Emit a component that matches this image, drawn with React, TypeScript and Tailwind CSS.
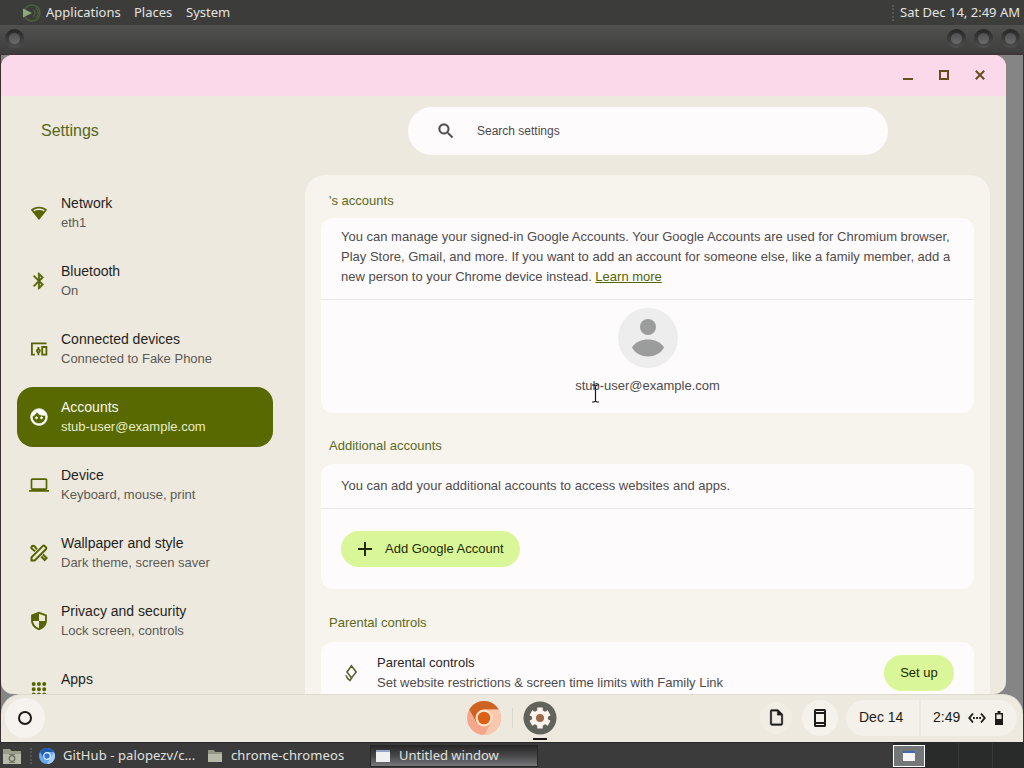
import type { ReactNode } from 'react';
import {
    MdBluetooth,
    MdFace,
    MdOutlineInsertDriveFile,
    MdOutlineLaptop,
    MdSearch,
} from 'react-icons/md';

interface NavItem {
    icon: ReactNode;
    label: string;
    sub?: string;
    active?: boolean;
}

function WifiIcon() {
    return (
        <svg viewBox="0 0 20 20" className="h-5 w-5" fill="currentColor">
            <path fillRule="evenodd" d="M10 3.8c3.2 0 6 1.1 8.2 3L10 17 1.8 6.8C4 4.9 6.8 3.8 10 3.8zm0 1.7c-2.1 0-4.100.6-5.800 1.600l.9 1.100C6.500 7.500 8.200 7.100 10 7.100s3.500.4 4.900 1.100l.9-1.100C14.100 6.100 12.100 5.500 10 5.500z" />
        </svg>
    );
}

function DevicesIcon() {
    return (
        <svg viewBox="0 0 20 20" className="h-5 w-5" fill="none" stroke="currentColor" strokeWidth="1.8">
            <path d="M17.500 4.300H2.900v11.400h3M13.200 8h4.200v7.700h-4.200z" />
            <circle cx="9.400" cy="11.800" r="1.500" />
            <path d="M9.400 8v2.200M9.400 13.400v2.900" />
        </svg>
    );
}

function StyleIcon() {
    return (
        <svg viewBox="0 0 20 20" className="h-5 w-5" fill="none" stroke="currentColor" strokeWidth="2">
            <path d="M2.500 17.500v-3.200L13.700 3.100a1.500 1.500 0 0 1 2.100 0l1.100 1.100a1.500 1.500 0 0 1 0 2.100L5.700 17.500z" />
            <path d="M8 6.300 5.500 3.200a1.700 1.700 0 0 0-2.500 2.500l3.200 2.500M12.300 13.500l3.300 3.500 2-2-3.700-3.400" />
        </svg>
    );
}

function ShieldIcon() {
    return (
        <svg viewBox="0 0 24 24" className="h-5 w-5" fill="currentColor">
            <path fillRule="evenodd" d="M12 1 21.500 4.500V11.500c0 5.300-4 10-9.500 11.500-5.500-1.500-9.500-6.200-9.500-11.500V4.500zM12 3.300V12h7.300V6zM12 12H4.700c.5 4 3.400 7.300 7.300 8.600z" />
        </svg>
    );
}

function AppsIcon() {
    return (
        <svg viewBox="0 0 20 20" className="h-5 w-5" fill="none" stroke="currentColor" strokeWidth="4" strokeLinecap="round" strokeDasharray="0 5.25">
            <path d="M4.700 5h11M4.700 10.200h11M4.700 15.400h11" />
        </svg>
    );
}

const navItems: NavItem[] = [
    { icon: <WifiIcon />, label: 'Network', sub: 'eth1' },
    { icon: <MdBluetooth className="h-5 w-5 stroke-current stroke-[0.4] [&>path[fill=none]]:stroke-none" />, label: 'Bluetooth', sub: 'On' },
    { icon: <DevicesIcon />, label: 'Connected devices', sub: 'Connected to Fake Phone' },
    { icon: <MdFace className="h-5 w-5 stroke-current stroke-[0.8] [&>path[fill=none]]:stroke-none" />, label: 'Accounts', sub: 'stub-user@example.com', active: true },
    { icon: <MdOutlineLaptop className="h-5 w-5" />, label: 'Device', sub: 'Keyboard, mouse, print' },
    { icon: <StyleIcon />, label: 'Wallpaper and style', sub: 'Dark theme, screen saver' },
    { icon: <ShieldIcon />, label: 'Privacy and security', sub: 'Lock screen, controls' },
    { icon: <AppsIcon />, label: 'Apps' },
];

function Knob() {
    return (
        <span className="flex h-[19px] w-[19px] items-center justify-center rounded-full bg-gradient-to-b from-[#262626] to-[#505050]">
            <span className="h-[11px] w-[11px] rounded-full bg-gradient-to-b from-[#505050] to-[#6a6a6a]" />
        </span>
    );
}

function TopPanel() {
    return (
        <div className="flex h-[25px] shrink-0 items-center bg-[#3c3c3b] pl-5 pr-1 font-['Noto_Sans',sans-serif] text-[13px] text-[#e4e4e0]">
            <svg viewBox="0 0 22 20" className="h-5 w-[22px]" fill="none">
                <circle cx="12" cy="10" r="8" stroke="#4d6338" strokeWidth="1.5" />
                <path d="M3 5.500v9l9-4.500z" fill="#8cab78" />
                <path d="M13 6.500a4 4 0 0 1 0 7M15.500 5a6 6 0 0 1 0 10" stroke="#56703e" />
            </svg>
            <span className="ml-1 w-[88px]">Applications</span>
            <span className="w-[52px]">Places</span>
            <span>System</span>
            <span className="ml-auto mr-1.5 h-4 border-l-2 border-dotted border-[#565656]" />
            <span className="whitespace-nowrap">Sat Dec 14, 2:49 AM</span>
        </div>
    );
}

function Sidebar() {
    return (
        <nav className="flex w-[304px] shrink-0 flex-col gap-2 pl-4 pt-2">
            {navItems.map((item) => (
                <div
                    key={item.label}
                    className={`flex h-[60px] w-64 shrink-0 gap-3 rounded-2xl pl-3 ${item.active ? 'bg-[#576900] text-white' : 'text-[#566500]'}`}
                >
                    <div className="flex items-center">{item.icon}</div>
                    <div className="pt-2.5">
                        <p className={`text-sm leading-5 ${item.active ? 'text-[#f8f9e9]' : 'text-[#1f1f1c]'}`}>{item.label}</p>
                        {item.sub && (
                            <p className={`text-[13px] leading-[19px] ${item.active ? 'text-[#e9eeca]' : 'text-[#5b5a54]'}`}>{item.sub}</p>
                        )}
                    </div>
                </div>
            ))}
        </nav>
    );
}

function AccountsPage() {
    return (
        <main className="w-[685px] shrink-0 rounded-t-[20px] bg-[#f7f3ed] px-4 text-[13px] text-[#4e4b4c]">
            <h2 className="h-[43px] pl-2 pt-4 leading-5 text-[#5a6a1d]">&apos;s accounts</h2>
            <section className="h-[195px] rounded-xl bg-[#fefbfc]">
                <p className="h-[82px] border-b border-[#ebe7e6] px-5 pt-[9px] leading-5 whitespace-nowrap">
                    You can manage your signed-in Google Accounts. Your Google Accounts are used for Chromium browser,
                    <br />
                    Play Store, Gmail, and more. If you want to add an account for someone else, like a family member, add a
                    <br />
                    new person to your Chrome device instead. <a className="text-[#566500] underline">Learn more</a>
                </p>
                <div className="flex flex-col items-center pt-2">
                    <svg viewBox="0 0 60 60" className="h-[60px] w-[60px]">
                        <circle cx="30" cy="30" r="30" fill="#ededed" />
                        <circle cx="30" cy="19" r="8" fill="#9b9d9c" />
                        <path d="M14 39.500C17 34 24 31.500 30 31.500s13 2.500 16 8C43 45.500 36 48.500 30 48.500s-13-3-16-9z" fill="#9b9d9c" />
                    </svg>
                    <p className="mt-2 leading-5">stub-user@example.com</p>
                </div>
            </section>

            <h2 className="h-[51px] pl-2 pt-[23px] leading-5 text-[#5a6a1d]">Additional accounts</h2>
            <section className="h-[125px] rounded-xl bg-[#fefbfc]">
                <p className="h-[45px] border-b border-[#ebe7e6] px-5 pt-3 leading-5">
                    You can add your additional accounts to access websites and apps.
                </p>
                <button className="ml-5 mt-[22px] flex h-9 w-[179px] items-center rounded-full bg-[#d9f799] pl-3.5 text-[#1f2a00]">
                    <svg viewBox="0 0 20 20" className="mr-2.5 h-5 w-5" stroke="currentColor" strokeWidth="2">
                        <path d="M10 3v14M3 10h14" />
                    </svg>
                    Add Google Account
                </button>
            </section>

            <h2 className="h-[53px] pl-2 pt-6 leading-5 text-[#5a6a1d]">Parental controls</h2>
            <section className="flex h-20 items-start rounded-t-xl bg-[#fefbfc] pl-5 pr-5 pt-[11px]">
                <svg viewBox="0 0 20 20" className="mt-2.5 h-5 w-5" fill="none" stroke="#5d6130" strokeWidth="1.6">
                    <path d="M10.500 2.800 6 9l4.500 6 4.700-6zM4.500 12.500c1.200.2 1.300 1.500 1.800 2.500.8 1.300 2 1.800 2.700 2.500l2-3" />
                </svg>
                <div className="ml-4">
                    <p className="leading-5 text-[#282627]">Parental controls</p>
                    <p className="leading-5">Set website restrictions &amp; screen time limits with Family Link</p>
                </div>
                <button className="ml-auto mt-0.5 h-9 w-[70px] rounded-full bg-[#d9f799] text-[#1f2a00]">Set up</button>
            </section>
        </main>
    );
}

function SettingsWindow() {
    return (
        <div className="ml-px flex h-[639px] w-[1005px] shrink-0 flex-col overflow-hidden rounded-xl bg-[#ede9df]">
            <header className="flex h-[41px] shrink-0 items-center justify-end gap-[26px] bg-[#fbd9ea] pb-0.5 pr-[21px] text-[#64501c]">
                <span className="mt-2 h-0.5 w-2.5 bg-[#64501c]" />
                <span className="h-2.5 w-2.5 border-2 border-[#64501c]" />
                <svg viewBox="0 0 10 10" className="h-2.5 w-2.5" stroke="currentColor" strokeWidth="2">
                    <path d="m.8.8 8.400 8.400m0-8.400L.8 9.200" />
                </svg>
            </header>
            <div className="flex h-[79px] shrink-0 items-start pt-[11px]">
                <h1 className="w-[366px] pl-10 pt-3 text-base leading-6 text-[#56661b]">Settings</h1>
                <div className="ml-[41px] flex h-12 w-[480px] items-center rounded-full bg-[#fefbfd] pl-7 text-xs text-[#4b494b]">
                    <MdSearch className="mr-[21px] h-5 w-5 stroke-current stroke-[0.4] [&>path[fill=none]]:stroke-none" />
                    Search settings
                </div>
            </div>
            <div className="flex min-h-0 flex-1 overflow-hidden">
                <Sidebar />
                <AccountsPage />
            </div>
        </div>
    );
}

function Shelf() {
    return (
        <div className="mx-px flex h-12 items-center rounded-t-[20px] border-t border-[#dedbd3] bg-[#ede9df] pb-0.5 text-[14px] text-[#1d1c19]">
            <div className="ml-1 flex h-10 w-10 items-center justify-center rounded-full bg-[#f6f2ed]">
                <span className="h-3.5 w-3.5 rounded-full border-2 border-[#1c1b19]" />
            </div>
            <div className="ml-[422px] flex items-center">
                <svg viewBox="0 0 34 34" className="h-[34px] w-[34px]">
                    <circle cx="17" cy="17" r="17" fill="#f6a78b" />
                    <path d="M2.300 8.500A17 17 0 0 1 31.700 8.500L17 9l-7.500 12.500z" fill="#cd6221" />
                    <path d="M31.700 8.500A17 17 0 0 1 17 34l7.400-12.700L17 8.500z" fill="#fac8af" />
                    <circle cx="17" cy="17" r="8.500" fill="#ffe5c9" />
                    <circle cx="17" cy="17" r="6.300" fill="#dc6016" />
                </svg>
                <span className="ml-[11px] h-5 w-px bg-[#dcd8cf]" />
                <div className="relative ml-2.5">
                    <svg viewBox="0 0 34 34" className="h-[34px] w-[34px]">
                        <circle cx="17" cy="17" r="16.500" fill="#62635b" />
                        <path d="M17 6.500v21M7.900 11.750l18.200 10.500M7.900 22.250l18.200-10.500" stroke="#fff4ed" strokeWidth="5.5" />
                        <circle cx="17" cy="17" r="6" fill="#9b6a49" stroke="#fff4ed" strokeWidth="4" />
                    </svg>
                    <span className="absolute left-2.5 top-[37px] h-0.5 w-3.5 bg-[#181816]" />
                </div>
            </div>
            <div className="ml-[203px] flex items-center">
                <div className="flex h-8 w-8 items-center justify-center rounded-full bg-[#f1ede5]">
                    <MdOutlineInsertDriveFile className="h-[19px] w-[19px] stroke-current stroke-[0.4] [&>path[fill=none]]:stroke-none" />
                </div>
                <div className="ml-2.5 flex h-9 w-9 items-center justify-center rounded-full bg-[#f5f2ec]">
                    <svg viewBox="0 0 14 20" className="h-5 w-3.5" fill="none" stroke="currentColor" strokeWidth="2">
                        <rect x="2" y="2" width="10" height="16" rx="0.5" />
                        <path d="M2 5h10M2 15h10" />
                    </svg>
                </div>
                <div className="ml-2 flex h-9 w-[73px] items-center rounded-l-full bg-[#f4f0ea] pl-[13px]">Dec 14</div>
                <div className="ml-0.5 flex h-9 w-[96px] items-center rounded-r-full bg-[#f4f0ea] pl-3">
                    2:49
                    <svg viewBox="0 0 18 12" className="ml-2 h-3 w-[18px]" fill="none" stroke="currentColor" strokeWidth="1.9">
                        <path d="M5 1.500 1.300 6 5 10.500M13 1.500 16.700 6 13 10.500" />
                        <path d="M5 6h1.800m1.300 0h1.800m1.300 0H13" />
                    </svg>
                    <svg viewBox="0 0 8 14" className="ml-[9px] h-3.5 w-2" fill="none">
                        <path d="M2.500 0h3v2H8v12H0V2h2.500z" fill="#1d1c19" />
                        <path d="M1.500 3.500h5V8h-5z" fill="#ece9e1" />
                    </svg>
                </div>
            </div>
        </div>
    );
}

function FolderIcon() {
    return (
        <svg viewBox="0 0 16 16" className="h-4 w-4 shrink-0">
            <path d="M1 2h6l1 2h7v10H1z" fill="#929685" />
            <path d="M1 6h14v8H1z" fill="#b8baa8" />
        </svg>
    );
}

function Taskbar() {
    return (
        <div className="flex h-[26px] items-center border-t border-[#292929] bg-[#3b3b3c] font-['Noto_Sans',sans-serif] text-[13px] text-[#e1e1df]">
            <svg viewBox="0 0 20 16" className="ml-0.5 h-4 w-5 shrink-0">
                <path d="M1 1h7l1.500 2H19v13H1z" fill="#999d89" />
                <path d="M1 6h18v10H1z" fill="#b8baa8" />
                <circle cx="10" cy="10.500" r="2.800" fill="none" stroke="#66695c" strokeWidth="1.2" />
                <path d="M7 6.500h6M7 14.500h6" stroke="#777a6c" />
            </svg>
            <span className="ml-2 h-4 border-l-2 border-dotted border-[#545454]" />
            <svg viewBox="0 0 16 16" className="ml-[7px] h-4 w-4 shrink-0">
                <circle cx="8" cy="8" r="8" fill="#69a8ef" />
                <path d="M1.100 4A8 8 0 0 1 14.900 4H8l-3.500 6z" fill="#205cae" />
                <path d="M14.900 4A8 8 0 0 1 8 16l3.500-6z" fill="#a6d0f8" />
                <circle cx="8" cy="8" r="3.300" fill="#2d75d4" stroke="#eef5fc" strokeWidth="1.2" />
            </svg>
            <span className="ml-2 w-36 whitespace-nowrap tracking-[0.1px]">GitHub - palopezv/c...</span>
            <FolderIcon />
            <span className="ml-2 w-[139px] whitespace-nowrap tracking-[0.1px]">chrome-chromeos</span>
            <div className="flex h-[22px] w-[168px] shrink-0 items-center border border-[#272727] bg-gradient-to-b from-[#29292a] via-[#48484a] to-[#777678] pl-[5px]">
                <svg viewBox="0 0 14 12" className="h-3 w-3.5">
                    <path d="M0 0h14v12H0z" fill="#eef0f2" />
                    <path d="M0 0h14v2H0z" fill="#96a3c1" />
                </svg>
                <span className="ml-[9px] whitespace-nowrap">Untitled window</span>
            </div>
            <div className="ml-auto flex h-full w-[131px] items-center bg-[#292b2b]">
                <div className="flex h-[22px] w-8 items-center justify-center border border-white bg-[#737778]">
                    <span className="h-2.5 w-3 border-t-2 border-[#4667a8] bg-[#f5f5f5]" />
                </div>
                <span className="ml-[33px] h-full w-px bg-[#393b3b]" />
                <span className="ml-[33px] h-full w-px bg-[#393b3b]" />
            </div>
        </div>
    );
}

export default function App() {
    return (
        <div className="flex h-[768px] w-[1024px] flex-col overflow-hidden bg-[#3c3c3b] font-['Liberation_Sans',sans-serif]">
            <TopPanel />
            <div className="flex h-[30px] shrink-0 items-center gap-2 border-b-2 border-[#403538] bg-gradient-to-b from-[#515150] to-[#3e3e3d] pb-0.5 pl-[5px] pr-1">
                <Knob />
                <span className="flex-1" />
                <Knob />
                <Knob />
                <Knob />
            </div>
            <div className="flex h-[687px] shrink-0 flex-col border-x border-[#3a302f] bg-[#858585]">
                <div className="-ml-px">
                    <SettingsWindow />
                </div>
                <div className="-mx-px">
                    <Shelf />
                </div>
            </div>
            <Taskbar />
            {/* Mouse pointer over the page */}
            <svg viewBox="0 0 9 19" className="absolute left-[591px] top-[384px] h-[19px] w-[9px]" fill="none">
                <path d="M1 1h2l1.500 1L6 1h2M4.500 2v15M1 18h2l1.500-1L6 18h2" stroke="#191919" strokeWidth="1.2" />
            </svg>
        </div>
    );
}
